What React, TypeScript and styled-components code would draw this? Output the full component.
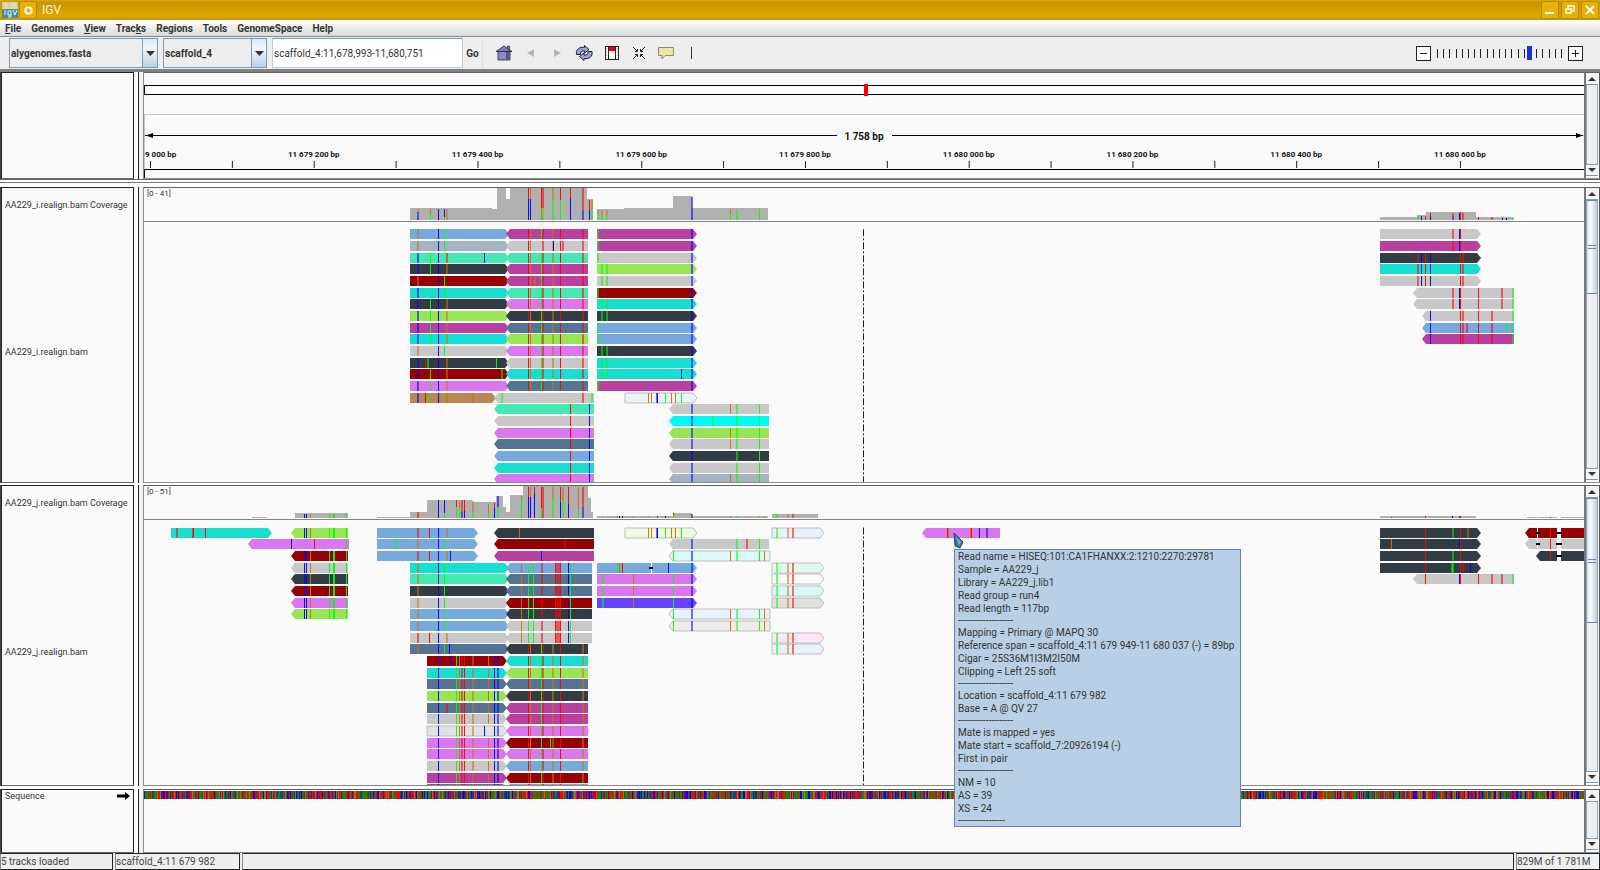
import React from "react";
import styled, { createGlobalStyle } from "styled-components";

const GlobalStyle = createGlobalStyle`
  * { box-sizing: border-box; }
  html, body { margin: 0; padding: 0; }
  body {
    font-family: Roboto, "Liberation Sans", sans-serif;
    font-size: 10px;
    color: #333;
    background: #fafafa;
  }
`;

/* ---------- palette and read data ---------- */

const READ_COLORS: Record<string, string> = {
  blue: "#76a9de",
  lilac: "#a6b4c2",
  green: "#45e8b2",
  dark: "#333c45",
  red: "#970000",
  cyan: "#17ded1",
  aqua: "#00fbf7",
  lime: "#97e454",
  mag: "#b940a0",
  gray: "#c8c8c8",
  pink: "#d976f0",
  slate: "#557393",
  brown: "#b98655",
  indigo: "#6644ff",
};

const BASE_COLORS: Record<string, string> = { r: "#f00", g: "#0f0", b: "#00f", o: "#d17105" };

interface ReadData {
  row: number;
  x1: number;
  x2: number;
  dir: "l" | "r" | "n";
  color: string;
  marks: string;
}

/* Builds one column of reads: a colour and a mark list for each successive row. */
function stack(
  row: number,
  x1: number,
  x2: number,
  dir: "l" | "r" | "n",
  colors: string,
  marks: string | string[],
): ReadData[] {
  return colors.split(" ").map((color, i) => ({
    row: row + i,
    x1,
    x2,
    dir,
    color,
    marks: typeof marks === "string" ? marks : marks[i] ?? marks[marks.length - 1],
  }));
}

const L1 = "417O 438b 444g";
const L2 = "417B 430g 438b 446O";
const M1 = "528r 530o 541g 542R 552O 560r 582R";
const R1 = "597G 691B";
const R2 = "601G 606G 691B";
const S1 = "417O 438b 444g";
const N1 = "521o 528g 533g 541R 555r 556R 558R 560r 568b 570g";
const N2 = "528r 530o 541g 542R 552O 560r 582O";
const P1 = "438b 456g 459o 461R 464r 472O 488o 494b 497B";
const Q1 = "673g 691B 730o 736G 759g 764o";
const T1 = "776G 787O 792R";

const READS_I: ReadData[] = [
  ...stack(0, 410, 509, "r", "blue lilac green dark red cyan dark lime mag cyan gray dark red pink", [
    L1, L1, "417B 430g 438b 446R 484b", L2, L1, "417B 438b 444g", L2, L2, L2, L2, L1,
    "417B 425r 427G 438b 446O 496g", L2 + " 501G", L2,
  ]),
  ...stack(14, 410, 496, "r", "brown", "417B 425r 427G 438b 446O 472O"),
  ...stack(0, 506, 588, "l", "mag gray green mag mag green pink dark slate lime pink gray cyan slate", [
    M1, "528r 530o 542R 552O 553b 560r 562R 582R", M1, M1, M1 + " 534O", M1, M1, M1, M1, M1, M1, M1, M1, M1,
  ]),
  ...stack(14, 494, 594, "l", "gray", "501G 582R 591G"),
  ...stack(15, 494, 594, "l", "green gray pink slate blue cyan pink", "570r 589b"),
  ...stack(0, 597, 697, "r", "mag mag gray lime gray red cyan dark blue blue dark cyan cyan mag", [
    R1, R1, R1, R2, R2, R1, R2, R2, R1, R1, R2, R2, R2 + " 681b", R1,
  ]),
  ...stack(14, 625, 697, "r", "#eaf2fa", "648o 651o 656B 657b 665g 671o 675o 681g"),
  ...stack(15, 669, 769, "l", "gray aqua lime gray dark gray lilac", [
    "691B 730o 736G 759g", "712G 736G 759g 691B", "691B 730o 736G 759g", "691B 730o 736G 759g",
    "691B 736G 759g", "691B 736G 759g", "691B 730o 736G 759g",
  ]),
  ...stack(0, 1380, 1481, "r", "gray mag dark cyan gray", [
    "1452R 1459b 1460r", "1452R 1459b 1460r", "1417R 1421b 1425r 1430b 1460r 1462R",
  ]),
  ...stack(5, 1413, 1514, "l", "gray gray", "1452R 1459b 1460r 1478r 1501R 1512G"),
  ...stack(7, 1422, 1514, "l", "gray blue mag", [
    "1430b 1460r 1462R 1478r 1491R 1512G",
    "1430b 1460r 1462R 1466R 1478r 1491R 1506g 1512G",
    "1430b 1460r 1462R 1478r 1491R 1512G",
  ]),
];

const READS_J: ReadData[] = [
  ...stack(0, 171, 272, "r", "cyan", "176R 193r 192R 205r"),
  ...stack(1, 248, 349, "l", "pink", "291b 314r 346g"),
  ...stack(0, 291, 348, "l", "lime", "304b 306b 310o 329g 333g 334g 346g"),
  ...stack(2, 291, 348, "l", "red gray dark red pink lime", "304b 306b 310o 329g 333g 334g 346g"),
  ...stack(0, 377, 478, "r", "blue blue blue", [
    "417R 429r 438b 446O", "395g 417O 438b 444g", "417R 429r 438b 446O 450b",
  ]),
  ...stack(0, 494, 594, "l", "dark red mag", ["519o", "564R", "541b"]),
  ...stack(3, 410, 509, "r", "cyan green dark gray blue blue gray slate", [
    S1, S1, S1, S1, S1, S1, "417R 429r 438b 446O", S1 + " 449b",
  ]),
  ...stack(3, 506, 592, "l", "blue slate slate red dark gray gray", N1),
  ...stack(11, 427, 507, "r", "red cyan slate lime slate gray #e0e2e4 pink pink gray mag slate", [
    P1 + " 450b", P1, P1, P1, P1 + " 446R", P1,
    "438b 456g 459o 461R 464r 472O 484b 494b 497B", P1,
  ]),
  ...stack(10, 506, 588, "l", "dark cyan lime slate dark mag mag pink red pink blue red blue", [
    N2, N2, N2, N2, N2, N2, N2, N2, "528r 530o 541g 550g 552O 560r 582O", N2,
  ]),
  ...stack(0, 625, 697, "r", "#f0fae0", "648o 651o 656B 657b 665g 671o 675o 681g"),
  ...stack(1, 669, 769, "l", "gray", "691B 736G 746R 759g"),
  ...stack(2, 669, 770, "l", "#dafaf7", Q1),
  ...stack(3, 597, 697, "r", "blue", "617G 619o 622r 668b 691B"),
  ...stack(4, 597, 697, "r", "pink pink indigo", "602G 633o 673g 691B"),
  ...stack(7, 669, 770, "l", "#e8f2fc #eeecea", Q1),
  ...stack(0, 772, 824, "r", "#e8f2fa", T1),
  ...stack(3, 772, 824, "r", "#e0faf0 #fafafa #d8faf7 #e0e0e0", T1),
  ...stack(9, 772, 824, "r", "#fae8fa #e8f2fa", T1),
  ...stack(0, 922, 1000, "l", "pink", "947r 948o 970o 971r 979b 986B"),
  ...stack(0, 1380, 1481, "r", "dark dark dark dark", [
    "1425r 1452G 1460r 1467O", "1391o 1425r 1459b 1460r", "1425r 1452G 1460r", "1425r 1451G 1452G 1460r 1462R 1470b",
  ]),
  ...stack(4, 1413, 1514, "l", "gray", "1425r 1459b 1460r 1478r 1491R 1501R 1512G"),
  ...stack(0, 1525, 1537, "l", "red gray", ""),
  ...stack(0, 1538, 1557, "n", "red gray", "1550r"),
  ...stack(0, 1561, 1590, "n", "red gray dark", ""),
  ...stack(2, 1536, 1557, "l", "dark", "1550r"),
];

/* Coverage histogram steps: [from, to, top]. */
type Step = [number, number, number];
const COVER_I: Step[] = [
  [410, 492, 208], [492, 497, 209], [497, 506, 188], [506, 510, 199], [510, 587, 188], [587, 593, 199],
  [597, 624, 209], [624, 673, 208], [673, 692, 196], [692, 768, 208],
  [1380, 1417, 217], [1417, 1426, 215], [1426, 1476, 212], [1476, 1513, 217],
];
const COVER_J: Step[] = [
  [252, 267, 517], [295, 348, 513], [377, 410, 517], [410, 427, 512], [427, 472, 500], [472, 496, 502],
  [496, 503, 496], [503, 506, 507], [506, 510, 512], [510, 523, 495], [523, 588, 486], [588, 591, 498],
  [591, 593, 512], [597, 768, 516], [673, 692, 513], [772, 818, 514], [1380, 1476, 516],
  [1527, 1537, 517], [1538, 1557, 517], [1561, 1590, 517],
];

/* Allele bars inside the histogram: [x, top, bottom, base]. */
type Allele = [number, number, number, string];
const ALLELES_I: Allele[] = [
  [417, 209, 212, "O"], [417, 212, 220, "B"], [430, 209, 214, "o"], [430, 214, 220, "g"], [438, 209, 220, "b"],
  [444, 209, 217, "b"], [444, 217, 220, "g"], [446, 209, 220, "O"],
  [528, 188, 199, "r"], [528, 199, 220, "b"], [530, 188, 199, "o"], [530, 199, 220, "b"],
  [541, 188, 208, "r"], [541, 208, 220, "o"], [542, 188, 208, "R"], [542, 208, 220, "G"],
  [552, 188, 199, "O"], [552, 199, 220, "G"], [560, 188, 200, "r"], [560, 200, 220, "g"],
  [570, 188, 198, "r"], [570, 198, 220, "b"], [582, 188, 210, "R"], [582, 210, 220, "B"],
  [589, 200, 210, "r"], [589, 210, 220, "b"], [591, 200, 210, "O"], [591, 210, 220, "G"],
  [597, 210, 215, "O"], [597, 215, 220, "G"], [601, 210, 215, "O"], [601, 215, 220, "G"],
  [606, 210, 215, "O"], [606, 215, 220, "G"], [691, 197, 220, "B"], [730, 209, 214, "o"], [730, 214, 220, "g"],
  [736, 209, 220, "G"], [759, 209, 220, "g"],
  [1417, 216, 220, "G"], [1421, 216, 220, "b"], [1425, 216, 220, "r"], [1430, 213, 216, "r"], [1430, 216, 220, "b"],
  [1452, 213, 216, "R"], [1452, 216, 220, "B"], [1459, 213, 220, "b"], [1460, 212, 220, "r"], [1462, 213, 220, "R"],
  [1478, 217, 220, "r"], [1491, 217, 220, "R"], [1502, 218, 220, "b"], [1506, 218, 220, "b"], [1512, 217, 220, "G"],
];
const ALLELES_J: Allele[] = [
  [304, 514, 518, "b"], [306, 514, 518, "b"], [310, 514, 518, "o"], [329, 514, 518, "g"], [333, 514, 518, "g"],
  [334, 514, 518, "g"], [346, 514, 518, "g"], [417, 512, 518, "R"], [438, 500, 518, "b"], [444, 500, 513, "b"],
  [444, 513, 518, "g"], [456, 500, 507, "r"], [456, 507, 518, "g"], [459, 501, 508, "o"], [459, 508, 518, "g"],
  [461, 500, 512, "R"], [461, 512, 518, "B"], [464, 500, 511, "r"], [464, 511, 518, "b"], [472, 501, 512, "O"],
  [472, 512, 518, "G"], [488, 504, 513, "o"], [488, 513, 518, "g"], [494, 503, 508, "r"], [494, 508, 518, "b"],
  [497, 496, 507, "B"], [497, 507, 518, "G"], [521, 496, 500, "o"], [521, 500, 518, "g"],
  [528, 487, 497, "r"], [528, 497, 518, "b"], [530, 487, 497, "o"], [530, 497, 518, "b"], [534, 487, 494, "r"],
  [534, 494, 518, "b"], [541, 487, 508, "r"], [541, 508, 518, "g"], [542, 487, 518, "R"], [552, 487, 499, "O"],
  [552, 499, 518, "G"], [560, 487, 502, "r"], [560, 502, 518, "b"], [562, 487, 500, "O"], [562, 500, 518, "G"],
  [568, 487, 504, "r"], [568, 504, 518, "b"], [578, 487, 509, "o"], [578, 509, 518, "g"], [582, 487, 507, "R"],
  [582, 507, 518, "B"], [602, 516, 518, "g"], [617, 516, 518, "o"], [619, 516, 518, "b"], [622, 516, 518, "b"],
  [633, 516, 518, "o"], [648, 516, 518, "g"], [657, 516, 518, "r"], [665, 516, 518, "b"], [668, 516, 518, "g"],
  [673, 513, 515, "r"], [673, 515, 518, "g"], [691, 514, 518, "B"], [730, 516, 518, "o"], [736, 516, 518, "G"],
  [759, 516, 518, "g"], [764, 516, 518, "o"], [776, 514, 518, "G"], [787, 514, 518, "O"], [792, 514, 518, "R"],
  [1391, 517, 518, "r"], [1425, 516, 518, "r"], [1452, 516, 518, "b"], [1459, 516, 518, "r"], [1460, 516, 518, "r"],
  [1550, 517, 518, "r"],
];

/* ---------- chart drawing ---------- */

const FIRST_X = 144;
const SPAN = 1440;
const ROW_PITCH = 11.67;
const READ_HEIGHT = 10;

/* A lower-case base is a solid bar; an upper-case one is a wider, low-quality bar. */
function BaseBar({ x, y, height, base }: { x: number; y: number; height: number; base: string }) {
  const faint = base !== base.toLowerCase();
  return (
    <rect
      x={x}
      y={y}
      width={faint ? 2 : 1}
      height={height}
      fill={BASE_COLORS[base.toLowerCase()]}
      fillOpacity={faint ? 0.55 : 0.95}
    />
  );
}

function Read({ read, top }: { read: ReadData; top: number }) {
  const y = Math.round(top + read.row * ROW_PITCH);
  const { x1, x2, dir } = read;
  const outlined = read.color.startsWith("#");
  const mid = y + READ_HEIGHT / 2;
  const end = y + READ_HEIGHT;
  const points =
    dir === "r"
      ? `${x1},${y} ${x2 - 4},${y} ${x2},${mid} ${x2 - 4},${end} ${x1},${end}`
      : dir === "l"
        ? `${x1 + 4},${y} ${x2},${y} ${x2},${end} ${x1 + 4},${end} ${x1},${mid}`
        : `${x1},${y} ${x2},${y} ${x2},${end} ${x1},${end}`;
  return (
    <g>
      <polygon
        points={points}
        fill={outlined ? read.color : READ_COLORS[read.color]}
        stroke={outlined ? "#bdbdbd" : "none"}
        strokeWidth={1}
      />
      {read.marks
        .split(" ")
        .filter(Boolean)
        .map((m) => (
          <BaseBar key={m} x={parseInt(m, 10)} y={y} height={READ_HEIGHT} base={m.slice(-1)} />
        ))}
    </g>
  );
}

const ChartSvg = styled.svg<{ $height: number }>`
  display: block;
  flex: none;
  width: 100%;
  height: ${(p) => p.$height}px;
`;

interface ChartProps {
  top: number;
  height: number;
  base: number;
  firstRow: number;
  cover: Step[];
  alleles: Allele[];
  reads: ReadData[];
  children?: React.ReactNode;
}

function AlignmentChart({ top, height, base, firstRow, cover, alleles, reads, children }: ChartProps) {
  return (
    <ChartSvg $height={height} viewBox={`${FIRST_X} ${top} ${SPAN} ${height}`} preserveAspectRatio="none">
      {cover.map(([a, b, t]) => (
        <rect key={`${a}-${t}`} x={a} y={t} width={b - a} height={base - t} fill="#b0b0b0" />
      ))}
      {alleles.map(([x, a, b, c]) => (
        <BaseBar key={`${x}${a}${c}`} x={x} y={a} height={b - a} base={c} />
      ))}
      <rect x={FIRST_X} y={base + 1} width={SPAN} height={1} fill="#848484" />
      {reads.map((r, i) => (
        <Read key={i} read={r} top={firstRow} />
      ))}
      {children}
      <line x1={863.5} x2={863.5} y1={firstRow} y2={top + height} stroke="#222" strokeDasharray="7 2 2 2" />
    </ChartSvg>
  );
}

const SEQ_COLORS = ["#ff0000", "#009600", "#0000ff", "#c85f05", "#ff0000", "#009600", "#6a0096", "#5f5a08", "#204080"];

function buildSequence(): string[] {
  const paths = SEQ_COLORS.map(() => "");
  let seed = 7919;
  for (let x = 0; x < SPAN; x += 1) {
    seed = (seed * 1103515245 + 12345) % 2147483648;
    const k = Math.floor((seed / 2147483648) * SEQ_COLORS.length);
    paths[k] += `M${x} 0h1v8h-1z`;
  }
  return paths;
}

function SequenceChart() {
  const paths = buildSequence();
  return (
    <SequenceSvg viewBox={`0 0 ${SPAN} 8`} preserveAspectRatio="none">
      {paths.map((d, i) => (
        <path key={i} d={d} fill={SEQ_COLORS[i]} />
      ))}
    </SequenceSvg>
  );
}

const SequenceSvg = styled.svg`
  display: block;
  width: 100%;
  height: 8px;
  margin-top: 1px;
`;

/* ---------- ruler ---------- */

const RulerSvg = styled.svg`
  display: block;
  width: 100%;
  height: 105px;
  text {
    font-family: Roboto, "Liberation Sans", sans-serif;
    font-weight: 700;
    fill: #111;
  }
`;

const pct = (x: number) => `${((x - FIRST_X) / SPAN) * 100}%`;

const TICKS = Array.from({ length: 17 }, (_, i) => 150 + i * 81.87);
const TICK_LABELS = [
  "11 679 200 bp", "11 679 400 bp", "11 679 600 bp", "11 679 800 bp",
  "11 680 000 bp", "11 680 200 bp", "11 680 400 bp", "11 680 600 bp",
];

function Ruler() {
  return (
    <RulerSvg>
      <rect x="0" y="12" width="100%" height="10" fill="#000" />
      <rect x="1" y="13" width="100%" height="8" fill="#fff" />
      <rect x={pct(864)} y="11" width="4" height="12" fill="#f00" />
      <rect x="0" y="41" width="100%" height="1" fill="#c4c4d0" />
      <rect x="0" y="41" width="1" height="55" fill="#c4c4d0" />
      <rect x="1" y="62" width={pct(836)} height="1" fill="#000" />
      <rect x={pct(892)} y="62" width="48%" height="1" fill="#000" />
      <path d="M2 62.5l7-2.500v5z" fill="#000" />
      <svg x="100%" y="60" width="8" height="5" overflow="visible">
        <path d="M-1 2.500l-7-2.500v5z" fill="#000" />
      </svg>
      <text x={pct(864)} y="67" fontSize="10" textAnchor="middle">
        1 758 bp
      </text>
      {TICKS.map((x) => (
        <rect key={x} x={pct(x)} y="88" width="1" height="7" fill="#222" />
      ))}
      <text x="1" y="84" fontSize="8">
        9 000 bp
      </text>
      {TICK_LABELS.map((t, i) => (
        <text key={t} x={pct(TICKS[i * 2 + 2])} y="84" fontSize="8" textAnchor="middle">
          {t}
        </text>
      ))}
      <rect x="0" y="96" width="100%" height="1" fill="#000" />
      <rect x="0" y="96" width="1" height="9" fill="#000" />
    </RulerSvg>
  );
}

/* ---------- window frame ---------- */

const Window = styled.div`
  display: flex;
  flex-direction: column;
  min-height: 100vh;
  background: #fff;
`;

const TitleBar = styled.header`
  display: flex;
  align-items: center;
  gap: 1px;
  height: 20px;
  padding: 0 1px 0 2px;
  background: linear-gradient(#e0a808 0, #c89600 12%, #dda600 80%, #d09000);
  color: #fff8d8;
`;

const TitleText = styled.h1`
  flex: 1;
  margin: 0 0 0 4px;
  font-size: 12px;
  font-weight: 400;
`;

const TitleButton = styled.button`
  display: flex;
  align-items: center;
  justify-content: center;
  width: 18px;
  height: 18px;
  padding: 0;
  border: 1px solid #b98a00;
  border-radius: 2px;
  background: #eab000;
  & + & {
    margin-left: 1px;
  }
`;

const MenuBar = styled.nav`
  display: flex;
  align-items: flex-end;
  gap: 10px;
  height: 17px;
  padding-left: 5px;
  border-bottom: 1px solid #8a8a8a;
  background: linear-gradient(#fff, #dadada);
`;

const MenuButton = styled.button`
  padding: 0;
  border: 0;
  background: none;
  font: 700 10px/15px Roboto, "Liberation Sans", sans-serif;
  color: #333;
`;

const ToolBar = styled.div`
  display: flex;
  align-items: center;
  height: 35px;
  padding-left: 9px;
  border-bottom: 3px solid #808080;
  background: #eee;
`;

const SelectBox = styled.span<{ $width: number }>`
  position: relative;
  display: flex;
  width: ${(p) => p.$width}px;
  height: 30px;
  margin-right: 5px;
  border: 1px solid #7a9ab8;
  background: #eee;
  svg {
    position: absolute;
    right: 0;
    top: 0;
    pointer-events: none;
  }
`;

const Select = styled.select`
  appearance: none;
  flex: 1;
  min-width: 0;
  padding: 0 0 0 1px;
  border: 0;
  border-radius: 0;
  background: transparent;
  font: 700 10px Roboto, "Liberation Sans", sans-serif;
  color: #333;
`;

const LocusInput = styled.input`
  width: 191px;
  height: 30px;
  padding: 0 1px;
  border: 1px solid #b8cfe5;
  border-top-color: #7a9ab8;
  background: #fff;
  font: 400 10px Roboto, "Liberation Sans", sans-serif;
  color: #333;
`;

const GoButton = styled.button`
  width: 20px;
  height: 30px;
  padding: 0;
  border: 0;
  border-right: 1px solid #ddd;
  background: #eee;
  font: 700 10px Roboto, "Liberation Sans", sans-serif;
  color: #333;
`;

const IconRow = styled.div`
  display: flex;
  align-items: center;
  flex: 1;
  gap: 5px;
  padding-left: 10px;
`;

const IconButton = styled.button`
  display: flex;
  align-items: center;
  justify-content: center;
  width: 22px;
  height: 22px;
  padding: 0;
  border: 0;
  background: none;
`;

const Divider = styled.span`
  width: 1px;
  height: 12px;
  margin-left: 9px;
  background: #333;
`;

const ZoomControl = styled.div`
  display: flex;
  align-items: center;
  gap: 4px;
  padding-right: 17px;
`;

const ZoomButton = styled.button`
  display: flex;
  align-items: center;
  justify-content: center;
  width: 15px;
  height: 15px;
  padding: 0;
  border: 1px solid #222;
  background: #fff;
`;

const SliderBox = styled.span`
  display: grid;
  width: 129px;
  height: 16px;
  & > * {
    grid-area: 1 / 1;
  }
`;

const Slider = styled.input`
  appearance: none;
  width: 129px;
  height: 16px;
  margin: 0;
  background: transparent;
  &::-webkit-slider-thumb {
    appearance: none;
    width: 5px;
    height: 14px;
    border: 0;
    border-radius: 0;
    background: #1a34d0;
  }
`;

/* ---------- panels ---------- */

const Panel = styled.section<{ $height: number; $grow?: boolean }>`
  display: flex;
  flex: ${(p) => (p.$grow ? 1 : 0)} 0 ${(p) => p.$height}px;
  border-left: 1px solid #444;
`;

const Splitter = styled.div<{ $height: number }>`
  height: ${(p) => p.$height}px;
  background: #fff;
`;

const HeaderSplitter = styled.div`
  height: 7px;
  border-top: 1px solid #666;
  background: linear-gradient(#fff 2px, #777 2px, #777 3px, #fff 3px);
`;

const NameColumn = styled.div`
  display: flex;
  flex-direction: column;
  flex: none;
  width: 133px;
  border: 1px solid #222;
  border-bottom-color: #666;
  background: #fafafa;
`;

const Gutter = styled.div`
  flex: none;
  width: 5px;
  border-right: 1px solid #222;
  background: #fff;
`;

const GutterRight = styled.div`
  flex: none;
  width: 4px;
  background: #f4f4f4;
`;

const DataColumn = styled.div`
  position: relative;
  display: flex;
  flex-direction: column;
  flex: 1;
  min-width: 0;
  border: 1px solid #8c8c8c;
  border-top-color: #606060;
  border-right: 0;
  background: #fafafa;
`;

const TrackName = styled.div<{ $height?: number }>`
  display: flex;
  align-items: center;
  flex: ${(p) => (p.$height ? `0 0 ${p.$height}px` : 1)};
  padding-left: 3px;
  font-size: 9px;
  white-space: nowrap;
`;

const SequenceName = styled.div`
  display: flex;
  align-items: center;
  justify-content: space-between;
  height: 12px;
  padding: 0 3px;
  font-size: 9px;
`;

const RangeLabel = styled.span`
  position: absolute;
  left: 3px;
  top: 0;
  font-size: 8px;
  line-height: 12px;
`;

const ScrollTrack = styled.div`
  display: flex;
  flex-direction: column;
  flex: none;
  width: 16px;
  padding: 0 1px 2px 0;
  border-left: 2px solid #777;
  border-right: 1px solid #555;
  border-top: 1px solid #606060;
  border-bottom: 1px solid #8c8c8c;
  background: #fff;
`;

const ScrollBody = styled.div`
  flex: 1;
  border: 1px solid #8aa5c2;
  border-width: 0 1px;
  background: #eee;
`;

const ScrollButton = styled.button<{ $down?: boolean }>`
  display: flex;
  align-items: center;
  justify-content: center;
  width: 100%;
  height: 12px;
  padding: 0;
  border: 0 solid #7a9ab8;
  border-width: ${(p) => (p.$down ? "1px 0" : "0 0 1px")};
  background: #f4f4f4;
  svg {
    transform: ${(p) => (p.$down ? "scaleY(-1)" : "none")};
  }
`;

const ScrollThumb = styled.div<{ $height: number }>`
  display: flex;
  align-items: center;
  justify-content: center;
  height: ${(p) => p.$height}px;
  border: 1px solid #6382bf;
  border-width: 1px 0;
  background: linear-gradient(90deg, #c8dcf0, #fff 30%, #b8cfe5);
`;

const ThumbGrip = styled.span`
  width: 8px;
  height: 4px;
  border: 1px solid #6382bf;
  border-width: 1px 0;
`;

const Tooltip = styled.div`
  position: absolute;
  z-index: 2;
  left: 56.25%;
  top: 63px;
  min-width: 287px;
  padding: 0 3px;
  border: 1px solid #6382bf;
  background: #b8cfe5;
  font-size: 10px;
  color: #333;
  white-space: nowrap;
`;

const TooltipLine = styled.div<{ $rule?: boolean }>`
  height: ${(p) => (p.$rule ? 11 : 13)}px;
  line-height: ${(p) => (p.$rule ? 11 : 13)}px;
`;

const PointerSvg = styled.svg`
  position: absolute;
  z-index: 3;
  left: 56.2%;
  top: 46px;
`;

const StatusBar = styled.footer`
  display: flex;
  gap: 2px;
  height: 17px;
  background: #eee;
`;

const StatusCell = styled.div<{ $width?: number }>`
  flex: ${(p) => (p.$width ? `0 0 ${p.$width}px` : 1)};
  border: 1px solid #222;
  border-left-color: #888;
  background: #efefef;
  font-size: 10px;
  line-height: 16px;
  white-space: nowrap;
  color: #444;
`;

function ScrollBar({ thumb }: { thumb?: number }) {
  return (
    <ScrollTrack>
      <ScrollButton aria-label="Scroll up">
        <Triangle />
      </ScrollButton>
      <ScrollBody>
        {thumb ? (
          <ScrollThumb $height={thumb}>
            <ThumbGrip />
          </ScrollThumb>
        ) : null}
      </ScrollBody>
      <ScrollButton $down aria-label="Scroll down">
        <Triangle />
      </ScrollButton>
    </ScrollTrack>
  );
}

function Triangle() {
  return (
    <svg width="8" height="4">
      <path d="M4 0l4 4H0z" fill="#333" />
    </svg>
  );
}

function Combo({ label, value, width }: { label: string; value: string; width: number }) {
  return (
    <SelectBox $width={width}>
      <Select aria-label={label} defaultValue={value}>
        <option>{value}</option>
      </Select>
      <svg width="15" height="28">
        <defs>
          <linearGradient id="combo" x2="0" y2="1">
            <stop offset="0" stopColor="#dce8f4" />
            <stop offset="0.35" stopColor="#f4f8fc" />
            <stop offset="1" stopColor="#b8cfe5" />
          </linearGradient>
        </defs>
        <rect width="15" height="28" fill="url(#combo)" />
        <rect width="1" height="28" fill="#7a9ab8" />
        <path d="M4 12h9l-4.500 5z" fill="#333" />
      </svg>
    </SelectBox>
  );
}

const MENUS: [string, string, string][] = [
  ["", "F", "ile"], ["Genomes", "", ""], ["", "V", "iew"], ["Trac", "k", "s"],
  ["Regions", "", ""], ["Tools", "", ""], ["GenomeSpace", "", ""], ["Help", "", ""],
];

const RULE = "--------------------";
const TOOLTIP_LINES = [
  "Read name = HISEQ:101:CA1FHANXX:2:1210:2270:29781",
  "Sample = AA229_j",
  "Library = AA229_j.lib1",
  "Read group = run4",
  "Read length = 117bp",
  RULE,
  "Mapping = Primary @ MAPQ 30",
  "Reference span = scaffold_4:11 679 949-11 680 037 (-) = 89bp",
  "Cigar = 25S36M1I3M2I50M",
  "Clipping = Left 25 soft",
  RULE,
  "Location = scaffold_4:11 679 982",
  "Base = A @ QV 27",
  RULE,
  "Mate is mapped = yes",
  "Mate start = scaffold_7:20926194 (-)",
  "First in pair",
  RULE,
  "NM = 10",
  "AS = 39",
  "XS = 24",
  "-----------------",
];

function Gap() {
  return (
    <>
      <Gutter />
      <GutterRight />
    </>
  );
}

export default function App() {
  return (
    <Window>
      <GlobalStyle />
      <TitleBar>
        <svg width="16" height="18">
          <rect y="1" width="16" height="16" rx="1" fill="#4a8ba0" />
          <rect y="1" width="16" height="7" fill="#c9cfa8" />
          <path d="M1 3h5M8 3h6M2 5h4M9 5h5M1 7h6M8 7h7" stroke="#f4e9b0" />
          <path d="M3 9v5M6 10h3v6H6M6 10v4h3M11 9l2 5 2-5" stroke="#e6f2f4" fill="none" />
        </svg>
        <TitleButton aria-label="Window menu">
          <svg width="9" height="9">
            <path d="M3 1.500h3L7.500 3v3L6 7.500H3L1.500 6V3z" fill="none" stroke="#fff" strokeWidth="2" />
          </svg>
        </TitleButton>
        <TitleText>IGV</TitleText>
        <TitleButton aria-label="Minimize">
          <svg width="10" height="10">
            <rect y="7" width="9" height="2" fill="#fff" />
          </svg>
        </TitleButton>
        <TitleButton aria-label="Restore">
          <svg width="10" height="10" fill="none" stroke="#fff">
            <path d="M3 3V1h6v5H7" strokeWidth="1.500" />
            <rect x="1" y="4" width="5" height="4" strokeWidth="1.500" />
          </svg>
        </TitleButton>
        <TitleButton aria-label="Close">
          <svg width="10" height="10">
            <path d="M1 1l8 8M9 1L1 9" stroke="#fff" strokeWidth="2" />
          </svg>
        </TitleButton>
      </TitleBar>

      <MenuBar>
        {MENUS.map(([a, key, b]) => (
          <MenuButton key={a + key + b}>
            {a}
            {key ? <u>{key}</u> : null}
            {b}
          </MenuButton>
        ))}
      </MenuBar>

      <ToolBar>
        <Combo label="Genome" value="alygenomes.fasta" width={149} />
        <Combo label="Chromosome" value="scaffold_4" width={104} />
        <LocusInput aria-label="Locus" defaultValue="scaffold_4:11,678,993-11,680,751" />
        <GoButton>Go</GoButton>
        <IconRow>
          <IconButton aria-label="Home">
            <svg width="18" height="16">
              <path d="M12.500 1h2v5h-2z" fill="#6a6aa0" stroke="#222240" strokeWidth="0.600" />
              <path d="M9 1L1 6.500h16z" fill="#7c7cb4" stroke="#222240" strokeWidth="0.800" />
              <path d="M3 6.500h12V15H3z" fill="#8c8cc4" stroke="#222240" strokeWidth="0.800" />
              <path d="M11 7h3.500v7.500H11z" fill="#55558c" />
            </svg>
          </IconButton>
          <IconButton aria-label="Back">
            <svg width="8" height="8">
              <path d="M7 0v8L0 4z" fill="#b4b4b4" />
            </svg>
          </IconButton>
          <IconButton aria-label="Forward">
            <svg width="8" height="8">
              <path d="M0 0v8l7-4z" fill="#b4b4b4" />
            </svg>
          </IconButton>
          <IconButton aria-label="Refresh">
            <svg width="20" height="16" stroke="#1c2040" strokeWidth="1" fill="#9aa2dc">
              <path d="M1.500 9.500C.5 4.500 4.500 1.500 9.500 2.500V.5L14 4.500 9.500 8V6C6.500 5.500 5 7 5.500 9.500z" />
              <path d="M17 6.500c1 5-3 8-8 7v2L4.500 11.500 9 8v2c3 .5 4.500-1 4-3.500z" />
            </svg>
          </IconButton>
          <IconButton aria-label="Region of interest">
            <svg width="14" height="14">
              <rect x="0.500" y="0.500" width="13" height="13" fill="#fff" stroke="#222" />
              <path d="M3.500 1v12M10.500 1v12" stroke="#222" />
              <rect x="4" y="1" width="6" height="4" fill="#f00000" />
              <path d="M1 3h2M1 6h2M1 9h2M11 3h2M11 6h2M11 9h2" stroke="#f0b0b0" />
            </svg>
          </IconButton>
          <IconButton aria-label="Fit data to window">
            <svg width="12" height="12" stroke="#222" fill="none">
              <path d="M0 0l4 4M12 0L8 4M0 12l4-4M12 12L8 8" />
              <path d="M2 4.500h2.500V2M10 4.500H7.500V2M2 7.500h2.500V10M10 7.500H7.500V10" />
            </svg>
          </IconButton>
          <IconButton aria-label="Popup text">
            <svg width="16" height="13">
              <path d="M.5.5h15v8H7L4 12V8.500H.5z" fill="#ece8a4" stroke="#8a8a6c" />
            </svg>
          </IconButton>
          <Divider />
        </IconRow>
        <ZoomControl>
          <ZoomButton aria-label="Zoom out">
            <svg width="9" height="9">
              <path d="M1 4.500h7" stroke="#222" />
            </svg>
          </ZoomButton>
          <SliderBox>
            <svg width="129" height="16">
              {Array.from({ length: 21 }, (_, i) => (
                <rect key={i} x={Math.round(2 + i * 6.2)} y="4" width="1" height="9" fill="#222" />
              ))}
            </svg>
            <Slider type="range" aria-label="Zoom" min={0} max={200} defaultValue={148} />
          </SliderBox>
          <ZoomButton aria-label="Zoom in">
            <svg width="9" height="9">
              <path d="M1 4.500h7M4.500 1v7" stroke="#222" />
            </svg>
          </ZoomButton>
        </ZoomControl>
      </ToolBar>

      <Panel $height={107}>
        <NameColumn />
        <Gap />
        <DataColumn>
          <Ruler />
        </DataColumn>
        <ScrollBar />
      </Panel>
      <HeaderSplitter />
      <Splitter $height={1} />

      <Panel $height={296} $grow>
        <NameColumn>
          <TrackName $height={33}>AA229_i.realign.bam Coverage</TrackName>
          <TrackName>AA229_i.realign.bam</TrackName>
        </NameColumn>
        <Gap />
        <DataColumn>
          <AlignmentChart
            top={188}
            height={294}
            base={220}
            firstRow={229.3}
            cover={COVER_I}
            alleles={ALLELES_I}
            reads={READS_I}
          />
          <RangeLabel>[0 - 41]</RangeLabel>
        </DataColumn>
        <ScrollBar thumb={94} />
      </Panel>
      <Splitter $height={2} />

      <Panel $height={301} $grow>
        <NameColumn>
          <TrackName $height={33}>AA229_j.realign.bam Coverage</TrackName>
          <TrackName>AA229_j.realign.bam</TrackName>
        </NameColumn>
        <Gap />
        <DataColumn>
          <AlignmentChart
            top={486}
            height={299}
            base={518}
            firstRow={527.5}
            cover={COVER_J}
            alleles={ALLELES_J}
            reads={READS_J}
          >
            <rect x={651} y={563} width={1} height={10} fill="#fff" />
            <path
              d="M649 568h4M1536 533h4M1556 533h6M1536 544h4M1556 544h6M1556 556h6"
              stroke="#000"
              strokeWidth={2}
            />
          </AlignmentChart>
          <RangeLabel>[0 - 51]</RangeLabel>
          <PointerSvg width="12" height="18">
            <path d="M1 1l9 9-3 6-5-2z" fill="#3f78b0" stroke="#1d3f66" />
            <path d="M3 5l5 5-2 3z" fill="#7fb0dc" />
          </PointerSvg>
          <Tooltip role="tooltip">
            {TOOLTIP_LINES.map((line, i) => (
              <TooltipLine key={i} $rule={line.startsWith("--")}>
                {line}
              </TooltipLine>
            ))}
          </Tooltip>
        </DataColumn>
        <ScrollBar thumb={125} />
      </Panel>
      <Splitter $height={3} />

      <Panel $height={64}>
        <NameColumn>
          <SequenceName>
            Sequence
            <svg width="13" height="8">
              <path d="M0 2.500h8V0l5 4-5 4V5.500H0z" fill="#000" />
            </svg>
          </SequenceName>
        </NameColumn>
        <Gap />
        <DataColumn>
          <SequenceChart />
        </DataColumn>
        <ScrollBar />
      </Panel>

      <StatusBar>
        <StatusCell $width={113}>5 tracks loaded</StatusCell>
        <StatusCell $width={125}>scaffold_4:11 679 982</StatusCell>
        <StatusCell />
        <StatusCell $width={84}>829M of 1 781M</StatusCell>
      </StatusBar>
    </Window>
  );
}
